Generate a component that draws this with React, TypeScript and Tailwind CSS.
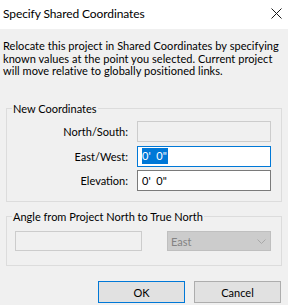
import React from 'react'

const font = "font-['Lato','Noto_Sans',sans-serif]"

const CloseIcon = () => (
  <svg width="11" height="11" viewBox="0 0 11 11" className="block">
    <path d="M0.5 0.5 L10.5 10.5 M10.5 0.5 L0.5 10.5" stroke="#1a1a1a" strokeWidth="1" fill="none" />
  </svg>
)

const Chevron = () => (
  <svg width="9" height="5" viewBox="0 0 9 5" className="block">
    <path d="M0.5 0.5 L4.5 4.5 L8.5 0.5" stroke="#a8a8a8" strokeWidth="1" fill="none" />
  </svg>
)

interface RowProps {
  label: string
  children: React.ReactNode
}

const Row: React.FC<RowProps> = ({ label, children }) => (
  <div className="flex items-center">
    <span className="w-[122px] text-right pr-[1px]">{label}</span>
    <div className="ml-[8px]">{children}</div>
  </div>
)

export default function App() {
  return (
    <div className={`w-[288px] h-[305px] bg-[#f0f0f0] overflow-hidden text-[11px] leading-[13px] text-black ${font}`}>
      {/* Barre de titre */}
      <div className="h-[29px] bg-white flex items-center justify-between pl-[3px] pr-[6px]">
        <span className="text-[12px] tracking-[-0.1px] pb-[2px]">Specify Shared Coordinates</span>
        <div className="pb-[3px]">
          <CloseIcon />
        </div>
      </div>

      {/* Description */}
      <p className="pt-[11px] pl-[3px] whitespace-nowrap tracking-[0.05px] leading-[12.5px]">
        Relocate this project in Shared Coordinates by specifying
        <br />
        known values at the point you selected. Current project
        <br />
        will move relative to globally positioned links.
      </p>

      {/* Nouvelles coordonnées */}
      <fieldset className="mt-[24px] mx-[6px] border border-[#dcdcdc] pb-[10px] w-[276px]">
        <legend className="ml-[5px] px-[1px]">New Coordinates</legend>
        <div className="flex flex-col gap-[3.5px] mt-[6.5px]">
          <Row label="North/South:">
            <div className="w-[134px] h-[21px] border border-[#cccccc] bg-[#f0f0f0]" />
          </Row>
          <Row label="East/West:">
            <div className="w-[134px] h-[21px] border border-[#0078d7] bg-white flex items-center pl-[4px]">
              <span className="bg-[#0078d7] text-white leading-[16px] pr-[1px]">0'&nbsp; 0"</span>
            </div>
          </Row>
          <Row label="Elevation:">
            <div className="w-[134px] h-[21px] border border-[#7a7a7a] bg-white flex items-center pl-[4px]">
              <span>0'&nbsp; 0"</span>
            </div>
          </Row>
        </div>
      </fieldset>

      {/* Angle */}
      <fieldset className="mt-[8px] mx-[6px] border border-[#dcdcdc] pb-[14px] w-[276px]">
        <legend className="ml-[5px] px-[1px]">Angle from Project North to True North</legend>
        <div className="flex items-center mt-[8px] pl-[8px]">
          <div className="w-[127px] h-[20px] border border-[#cccccc] bg-[#f0f0f0]" />
          <div className="ml-[25px] w-[104px] h-[20px] border border-[#bfbfbf] bg-[#cccccc] flex items-center justify-between pl-[3px] pr-[4px] text-[#838383]">
            <span>East</span>
            <Chevron />
          </div>
        </div>
      </fieldset>

      {/* Boutons */}
      <div className="flex justify-end gap-[9px] mt-[15px] pr-[7px]">
        <button className="w-[87px] h-[22px] border border-[#0078d7] bg-[#e1e1e1] text-[11px]">OK</button>
        <button className="w-[87px] h-[22px] border border-[#adadad] bg-[#e1e1e1] text-[11px]">Cancel</button>
      </div>
    </div>
  )
}
